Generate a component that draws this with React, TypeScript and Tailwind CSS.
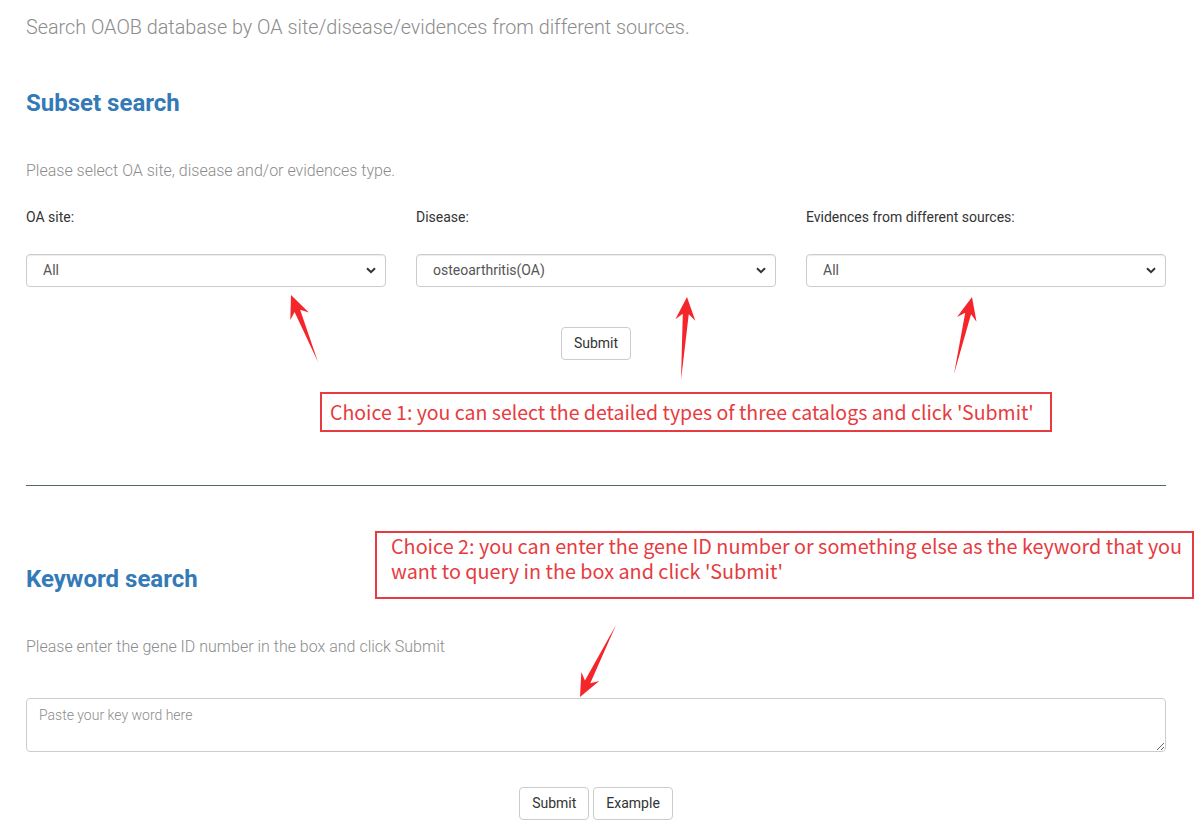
import React from 'react'

const arrows: [number, number, number, number][] = [
  // tailX, tailY, tipX, tipY
  [318, 362, 291, 295],
  [681, 380, 687, 297],
  [954, 374, 972, 297],
  [616, 625, 580, 697],
]

function arrowPoints(tx: number, ty: number, px: number, py: number) {
  const dx = px - tx
  const dy = py - ty
  const len = Math.hypot(dx, dy)
  const ux = dx / len
  const uy = dy / len
  const nx = -uy
  const ny = ux
  const bx = px - ux * 17
  const by = py - uy * 17
  const wx = px - ux * 23
  const wy = py - uy * 23
  const pts = [
    [tx, ty],
    [bx + nx * 3, by + ny * 3],
    [wx + nx * 10, wy + ny * 10],
    [px, py],
    [wx - nx * 10, wy - ny * 10],
    [bx - nx * 3, by - ny * 3],
  ]
  return pts.map((p) => p.join(',')).join(' ')
}

function Select({ value }: { value: string }) {
  return (
    <div className="relative">
      <select
        defaultValue={value}
        className="w-full h-[33px] appearance-none rounded border border-[#cccccc] bg-white pl-4 pr-8 text-[14px] text-[#555555] shadow-[inset_0_1px_1px_rgba(0,0,0,0.075)] outline-none"
      >
        <option>{value}</option>
      </select>
      <svg
        className="pointer-events-none absolute right-[10px] top-[13px]"
        width="10"
        height="7"
        viewBox="0 0 10 7"
      >
        <path d="M1 1.2 L5 5.2 L9 1.2" fill="none" stroke="#333" strokeWidth="2" />
      </svg>
    </div>
  )
}

function Button({ children }: { children: React.ReactNode }) {
  return (
    <button className="h-[33px] rounded border border-[#cccccc] bg-white px-3 text-[14px] text-[#333333]">
      {children}
    </button>
  )
}

export default function App() {
  return (
    <div
      className="relative h-[833px] w-[1198px] overflow-hidden bg-white"
      style={{ fontFamily: 'Roboto, "Liberation Sans", sans-serif' }}
    >
      <div className="w-[1192px] px-[26px] pt-[14px]">
        <p className="text-[19.8px] leading-[28px] font-light text-[#8c8c8c]">
          Search OAOB database by OA site/disease/evidences from different sources.
        </p>

        <h2 className="mt-[46px] text-[24px] leading-[30px] font-bold text-[#337ab7]">Subset search</h2>
        <p className="mt-[41px] text-[16px] leading-[24px] font-light text-[#8c8c8c]">
          Please select OA site, disease and/or evidences type.
        </p>

        <div className="mt-[24px] grid grid-cols-3 gap-x-[30px]">
          <div>
            <div className="text-[14px] leading-[20px] text-[#333333]">OA site:</div>
            <div className="mt-[27px]">
              <Select value="All" />
            </div>
          </div>
          <div>
            <div className="text-[14px] leading-[20px] text-[#333333]">Disease:</div>
            <div className="mt-[27px]">
              <Select value="osteoarthritis(OA)" />
            </div>
          </div>
          <div>
            <div className="text-[14px] leading-[20px] text-[#333333]">Evidences from different sources:</div>
            <div className="mt-[27px]">
              <Select value="All" />
            </div>
          </div>
        </div>

        <div className="mt-[40px] flex justify-center">
          <Button>Submit</Button>
        </div>

        <hr className="mt-[125px] border-0 border-t border-[#4f6b6b]" />

        <h2 className="mt-[78px] text-[24px] leading-[30px] font-bold text-[#337ab7]">Keyword search</h2>
        <p className="mt-[41px] text-[16px] leading-[24px] font-light text-[#8c8c8c]">
          Please enter the gene ID number in the box and click Submit
        </p>

        <textarea
          placeholder="Paste your key word here"
          className="mt-[39px] block h-[54px] w-full rounded border border-[#cccccc] px-3 py-[6px] text-[14px] font-light text-[#555555] placeholder:text-[#8c8c8c] outline-none"
        />

        <div className="mt-[35px] flex justify-center gap-1">
          <Button>Submit</Button>
          <Button>Example</Button>
        </div>
      </div>

      {/* annotations */}
      <div
        className="absolute left-[320px] top-[392px] flex h-[40px] w-[732px] items-center whitespace-nowrap border-2 border-[#e63b40] pl-[8px] text-[19.5px] text-[#e63b40]"
        style={{ fontFamily: '"Noto Sans CJK SC", "Liberation Sans", sans-serif' }}
      >
        Choice 1: you can select the detailed types of three catalogs and click 'Submit'
      </div>
      <div
        className="absolute left-[375px] top-[531px] h-[68px] w-[819px] border-2 border-[#e63b40] pl-[14px] text-[19.8px] leading-[25px] text-[#e63b40]"
        style={{ fontFamily: '"Noto Sans CJK SC", "Liberation Sans", sans-serif' }}
      >
        Choice 2: you can enter the gene ID number or something else as the keyword that you want to query in the box and click 'Submit'
      </div>

      <svg className="pointer-events-none absolute inset-0" width="1198" height="833">
        {arrows.map(([a, b, c, d], i) => (
          <polygon key={i} points={arrowPoints(a, b, c, d)} fill="#f5262b" />
        ))}
      </svg>
    </div>
  )
}
